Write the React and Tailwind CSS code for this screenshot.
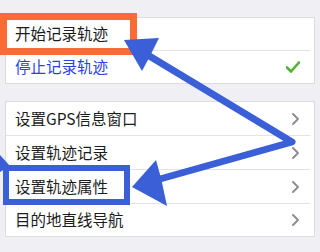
import React from "react";

const font = { fontFamily: '"Noto Sans CJK SC", "Noto Sans", sans-serif' };

function Chevron() {
  return (
    <svg width="9" height="14" viewBox="0 0 9 14" className="shrink-0">
      <path d="M2 2 L7 7 L2 12" fill="none" stroke="#8e8e93" strokeWidth="2" strokeLinecap="round" strokeLinejoin="round" />
    </svg>
  );
}

function Check() {
  return (
    <svg width="14" height="12" viewBox="0 0 14 12" className="shrink-0">
      <path d="M1 6.5 L5 10.5 L13 1.5" fill="none" stroke="#4cb52a" strokeWidth="2.6" strokeLinecap="round" strokeLinejoin="round" />
    </svg>
  );
}

function Row({ label, right, h, blue, last }) {
  return (
    <div className={`flex flex-col ${h}`}>
      <div className="flex flex-1 items-center justify-between pl-[9px] pr-[14px]">
        <span className={`text-[15.5px] leading-none ${blue ? "text-[#2b3fe6]" : "text-[#1c1c1c]"}`}>{label}</span>
        {right}
      </div>
      {!last && <div className="h-px bg-[#e3e3e6] mr-[4px]" />}
    </div>
  );
}

export default function App() {
  return (
    <div className="relative w-[320px] h-[252px] overflow-hidden bg-[#efeff4] pt-[17px] px-[5px]" style={font}>
      <div className="bg-white border border-[#dcdce0]">
        <Row label="开始记录轨迹" h="h-[33px]" />
        <Row label="停止记录轨迹" h="h-[32px]" blue right={<Check />} last />
      </div>
      <div className="mt-[17px] bg-white border border-[#dcdce0]">
        <Row label="设置GPS信息窗口" h="h-[34px]" right={<Chevron />} />
        <Row label="设置轨迹记录" h="h-[34px]" right={<Chevron />} />
        <Row label="设置轨迹属性" h="h-[34px]" right={<Chevron />} />
        <Row label="目的地直线导航" h="h-[32px]" right={<Chevron />} last />
      </div>

      <svg className="absolute left-0 top-0 pointer-events-none" width="320" height="252" viewBox="0 0 320 252">
        <rect x="3.5" y="16.5" width="130" height="35" fill="none" stroke="#fc6a36" strokeWidth="7" />
        <rect x="6" y="168" width="121" height="34" fill="none" stroke="#3a5fd7" strokeWidth="6" />
        <polyline points="146,54 292,142 160,179" fill="none" stroke="#3a5fd7" strokeWidth="7" strokeLinejoin="round" strokeLinecap="round" />
        <polygon points="124,40 159,38 150,56 142,71" fill="#3a5fd7" />
        <polygon points="132,187 156,160 161,178 167,206" fill="#3a5fd7" />
        <polygon points="0,155 10,166 0,172" fill="#3a5fd7" />
      </svg>
    </div>
  );
}
